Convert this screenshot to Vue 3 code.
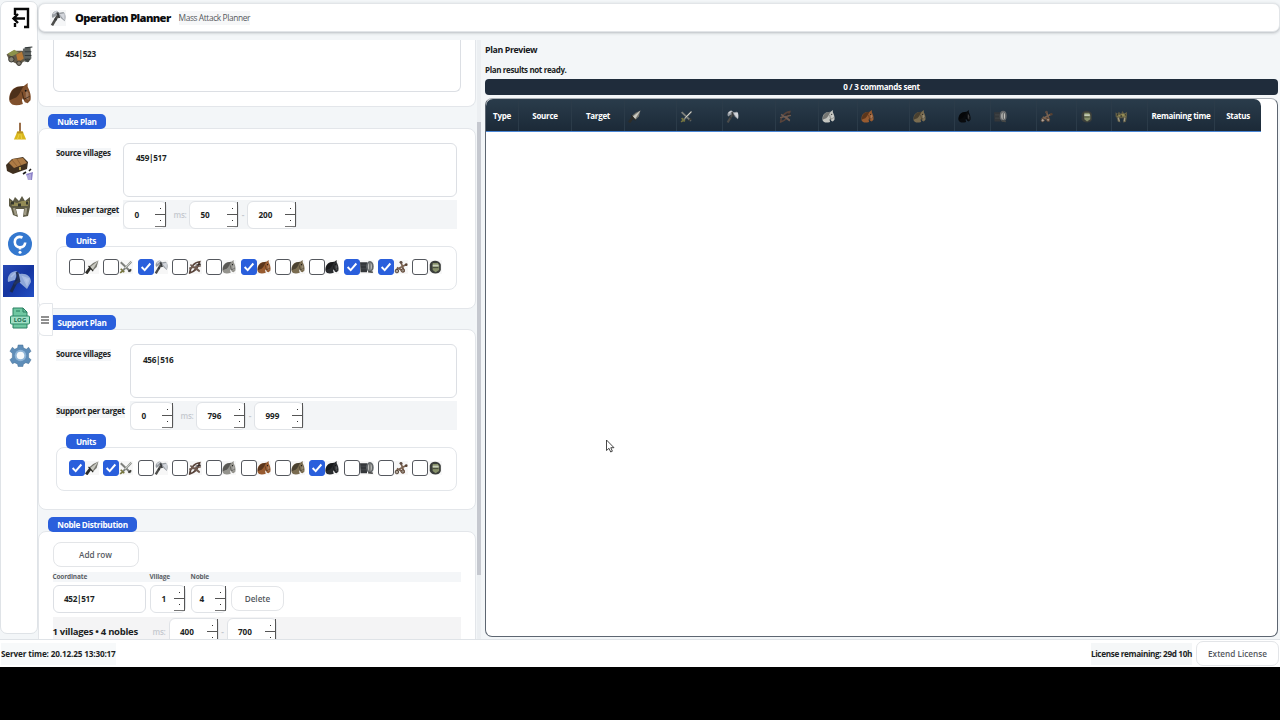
<script setup>
import { reactive } from 'vue'

const units = ['spear', 'sword', 'axe', 'archer', 'scout', 'light', 'mounted', 'heavy', 'ram', 'catapult', 'knight']
const nuke = reactive([false, false, true, false, false, true, false, false, true, true, false])
const support = reactive([true, true, false, false, false, false, false, true, false, false, false])
const plans = [
  { key: 'nuke', title: 'Nuke Plan', source: '459|517', label: 'Nukes per target', checks: nuke, nums: ['0', '50', '200'] },
  { key: 'support', title: 'Support Plan', source: '456|516', label: 'Support per target', checks: support, nums: ['0', '796', '999'] },
]
const unitCols = ['spear', 'sword', 'axe', 'archer', 'scout', 'light', 'mounted', 'heavy', 'ram', 'catapult', 'knight', 'crown']
const horses = ['scout', 'light', 'mounted', 'heavy']
const iconRef = (u) => (horses.includes(u) ? '#horse' : '#' + u)
</script>

<template>
  <div class="page">
    <svg class="defs" aria-hidden="true">
      <symbol id="horse" viewBox="0 0 24 24">
        <path d="M1 19C0 12 3 6 9 4L16 3 20 0 20 4C22 8 24 13 23 18L20 21 17 20 15 16 14 18 15 22C9 24 3 24 1 19Z" fill="currentColor" />
        <path d="M1 18C1 11 4 6 10 4L16 3C13 7 12 12 8 15 5 16 3 17 1 18Z" fill="#000" opacity=".4" />
        <path d="M18 6L21 11 21 18 18 16Z" fill="#fff" opacity=".22" />
        <path d="M14 9L16 17 22 14" fill="none" stroke="#000" stroke-width="1" opacity=".5" />
        <circle cx="18" cy="8" r="1" fill="#111" />
      </symbol>
      <symbol id="spear" viewBox="0 0 24 24">
        <path d="M2 23L10 12" stroke="#2c2c28" stroke-width="5" />
        <path d="M23 1L20 12 13 19 7 11 14 5Z" fill="#77776f" />
        <path d="M23 1L13 17 9 12Z" fill="#c9c9c1" />
        <path d="M6 10L14 19" stroke="#25251f" stroke-width="2" />
      </symbol>
      <symbol id="sword" viewBox="0 0 24 24">
        <path d="M3 4L20 20M21 3L5 20" stroke="#7d7f7b" stroke-width="3.400" />
        <path d="M21 3L10 14" stroke="#d0d3ce" stroke-width="1.800" />
        <path d="M3 15L9 21M2 22L6 19" stroke="#77763f" stroke-width="3" />
        <path d="M16 20L21 16" stroke="#3b3b35" stroke-width="3" />
      </symbol>
      <symbol id="axe" viewBox="0 0 24 24">
        <path d="M3 23L13 6" stroke="#4d4d4b" stroke-width="4" />
        <path d="M10 8L4 12C1 8 4 2 10 1L14 4 20 3C24 6 24 12 22 17L16 12 15 9Z" fill="#989da2" />
        <path d="M10 2L5 6M16 7L21 6 21 13Z" fill="#d3d6dc" stroke="#d3d6dc" stroke-width="2" />
        <path d="M11 4L14 12M7 13L10 15" stroke="#393b3d" stroke-width="3" />
      </symbol>
      <symbol id="archer" viewBox="0 0 24 24">
        <path d="M3 22C3 14 10 4 20 3 18 11 14 19 3 22Z" fill="none" stroke="#58433a" stroke-width="3" />
        <path d="M2 14L22 10M4 8L20 20M13 13L20 19" stroke="#6f5b51" stroke-width="2.600" />
        <path d="M13 9L22 7" stroke="#322a28" stroke-width="2" />
      </symbol>
      <symbol id="ram" viewBox="0 0 24 24">
        <path d="M0 4H12V21H1Z" fill="#34373a" />
        <ellipse cx="17" cy="11" rx="5" ry="8" fill="#c0c0bc" stroke="#63676a" stroke-width="3" />
        <path d="M17 5V17M2 9H10M2 15H11" stroke="#44484b" stroke-width="1.800" />
        <path d="M14 20L22 21" stroke="#474846" stroke-width="3" />
      </symbol>
      <symbol id="catapult" viewBox="0 0 24 24">
        <path d="M3 17L20 8M12 4L17 18M5 13L18 20" stroke="#7a6250" stroke-width="3" />
        <circle cx="5" cy="19" r="3" fill="#b0a59a" stroke="#4f3f34" stroke-width="1.600" />
        <circle cx="15" cy="18" r="3" fill="#968c80" stroke="#593c2c" stroke-width="1.600" />
        <circle cx="12" cy="4" r="2.500" fill="#5d4c42" />
        <circle cx="21" cy="8" r="2.300" fill="#564032" />
      </symbol>
      <symbol id="knight" viewBox="0 0 24 24">
        <path d="M3 8C4 -1 20 -1 22 8V17C20 25 6 25 3 17Z" fill="#3b3e3b" />
        <path d="M8 5H17L19 9V17L13 21 8 17Z" fill="#87916a" />
        <path d="M8 8H18V11H8Z" fill="#c8cfbd" />
        <path d="M8 13H18" stroke="#4a4f3d" stroke-width="1.800" />
      </symbol>
      <symbol id="crown" viewBox="0 0 24 24">
        <path d="M1 4L5 7 7 3 11 7 14 2 17 7 22 3 22 13 20 22 15 23 16 15 8 15 10 23 5 21 3 14 1 12Z" fill="#5d5a45" />
        <path d="M2 7L9 9 14 7 21 7 20 12H4Z" fill="#938b55" />
        <path d="M3 9H6M10 11H13M18 9H20" stroke="#35372d" stroke-width="3" />
        <path d="M6 14L8 21M18 14L17 21" stroke="#a09b85" stroke-width="2.400" />
      </symbol>
    </svg>

    <main class="main">
      <nav class="side">
        <div class="nav n-exit">
          <svg viewBox="0 0 20 22"><path d="M4 8V2H17V20H13M4 16V20M14 11.500H2M7 7L2.500 11.500 7 16" fill="none" stroke="#080808" stroke-width="2.400" /></svg>
        </div>
        <div class="nav n-cart">
          <svg viewBox="0 0 28 22">
            <path d="M1 9L8 5 20 5 21 15 14 20 4 15Z" fill="#625a49" />
            <path d="M2 8L9 4 14 7 6 11Z" fill="#8c924b" />
            <path d="M11 9L17 6 19 13 13 17Z" fill="#b77936" />
            <path d="M18 3L26 1 27 13 20 17Z" fill="#5e6360" />
            <path d="M20 2L28 1M20 6H27M20 10H27M20 14H26" stroke="#33393a" stroke-width="1.200" />
            <circle cx="6" cy="14" r="2.800" fill="#858175" stroke="#35352f" />
            <circle cx="14" cy="18" r="2.400" fill="#837a6b" stroke="#34332e" />
            <circle cx="23" cy="15" r="2" fill="#414540" />
          </svg>
        </div>
        <div class="nav n-horse"><svg viewBox="0 0 24 24"><use href="#horse" /></svg></div>
        <div class="nav n-broom">
          <svg viewBox="0 0 16 22"><path d="M7 1H9V12H7Z" fill="#8c5b31" /><path d="M5 11H11L15 20H1Z" fill="#d9b71d" /><path d="M5 11H11L12 13H4Z" fill="#b88f21" /><path d="M5 20L7 14M10 20L9 14" stroke="#efd34b" /></svg>
        </div>
        <div class="nav n-chest">
          <svg viewBox="0 0 28 24">
            <path d="M0 8L6 2 17 0 22 5 21 12 7 17 1 14Z" fill="#40301f" />
            <path d="M3 6L7 2 17 1 21 6 8 11Z" fill="#ad7b44" />
            <path d="M6 3L11 9M11 2L15 8" stroke="#8f6236" />
            <path d="M13 10H15V13H13Z" fill="#b79d4e" />
            <path d="M20 17L27 15 26 23 22 23Z" fill="#8d83c9" />
            <path d="M17 17L20 15M23 14L25 12" stroke="#1d1c1c" stroke-width="1.600" />
            <path d="M22 18V23M24 17V23" stroke="#e4e1f3" stroke-width=".8" />
          </svg>
        </div>
        <div class="nav n-crown"><svg viewBox="0 0 24 24"><use href="#crown" /></svg></div>
        <div class="nav n-help">
          <svg viewBox="0 0 24 24"><circle cx="12" cy="12" r="12" fill="#3478cf" /><path d="M14.500 5.500C10 3.500 6.800 6.500 6.800 10 6.800 13.500 9.500 15.300 12 15.300 14.800 15.300 17 13.500 17.200 10.500M12 15V17.500" fill="none" stroke="#fff" stroke-width="2.600" /><circle cx="12" cy="20.300" r="1.500" fill="#fff" /></svg>
        </div>
        <div class="nav n-axe">
          <svg viewBox="0 0 31 32">
            <path d="M8 27L17 9" stroke="#1b2a52" stroke-width="3" />
            <path d="M14 9L12 15 5 17C4 11 7 7 13 6L17 9C23 8 28 11 28 17L24 24 17 18 16 14Z" fill="#8ea6d8" />
            <path d="M12 8L8 12M20 12L26 14 24 20Z" fill="#b4c4e8" stroke="#a9bce4" stroke-width="1.500" />
            <path d="M14 7L16 16L11 19" fill="none" stroke="#24345d" stroke-width="2.600" />
          </svg>
        </div>
        <div class="nav n-log">
          <svg viewBox="0 0 20 22">
            <path d="M3 1H13L17 5V21H3Z" fill="#6fc7a1" stroke="#2b8163" />
            <path d="M13 1V5H17M6 4H10" fill="none" stroke="#287c5e" />
            <rect x=".5" y="9" width="19" height="8" rx="1" fill="#a0dfc5" stroke="#2b8867" />
            <text x="10" y="15.200" text-anchor="middle" class="logtext">LOG</text>
          </svg>
        </div>
        <div class="nav n-gear">
          <svg viewBox="0 0 24 24">
            <path d="M9.500 1H14.500L15 4 18 5.500 20.500 3.500 23 7.500 20.500 10 20.500 14 23 16.500 20.500 20.500 17.500 19.500 15 21 14.500 23.500H9.500L9 21 6 19.500 3.500 20.500 1 16.500 3.500 14V10L1 7.500 3.500 3.500 6 5.500 9 4Z" fill="#5e8db8" stroke="#416b92" stroke-width=".5" />
            <circle cx="12" cy="12" r="6" fill="#8eb4d6" /><circle cx="12" cy="12" r="4" fill="#f6fafc" />
          </svg>
        </div>
      </nav>

      <div class="work">
        <header class="head">
          <svg class="headicon" viewBox="0 0 24 24"><use href="#axe" /></svg>
          <h1 class="h1">Operation Planner</h1>
          <span class="sub">Mass Attack Planner</span>
        </header>

        <div class="cols">
          <section class="left">
            <div class="card targets"><div class="area cut">454|523</div></div>

            <template v-for="p in plans" :key="p.key">
              <div class="pill" :class="p.key">{{ p.title }}</div>
              <div class="card plan" :class="p.key">
                <div class="row top">
                  <label class="lbl"><span>Source villages</span></label>
                  <div class="area">{{ p.source }}</div>
                </div>
                <div class="row per">
                  <label class="lbl"><span>{{ p.label }}</span></label>
                  <div class="strip">
                    <div class="spin s0">{{ p.nums[0] }}<i></i></div>
                    <span class="ms">ms:</span>
                    <div class="spin">{{ p.nums[1] }}<i></i></div>
                    <span class="dash">-</span>
                    <div class="spin">{{ p.nums[2] }}<i></i></div>
                  </div>
                </div>
                <div class="pill units">Units</div>
                <div class="unitbox">
                  <div v-for="(u, i) in units" :key="u" class="unit" @click="p.checks[i] = !p.checks[i]">
                    <span class="check" :class="{ on: p.checks[i] }">
                      <svg v-if="p.checks[i]" viewBox="0 0 16 16"><path d="M3 8L6.500 11.500 13 4" fill="none" stroke="#fff" stroke-width="2.200" /></svg>
                    </span>
                    <svg class="uicon" :class="u" viewBox="0 0 24 24"><use :href="iconRef(u)" /></svg>
                  </div>
                </div>
              </div>
            </template>

            <div class="pill noble">Noble Distribution</div>
            <div class="card last">
              <button class="btn add">Add row</button>
              <div class="thead"><span class="c1">Coordinate</span><span class="c2">Village</span><span>Noble</span></div>
              <div class="nrow">
                <div class="coord">452|517</div>
                <div class="spin small">1<i></i></div>
                <div class="spin small four">4<i></i></div>
                <button class="btn del">Delete</button>
              </div>
              <div class="sum">
                <b>1 villages • 4 nobles</b>
                <span class="ms">ms:</span>
                <div class="spin">400<i></i></div>
                <span class="dash">-</span>
                <div class="spin">700<i></i></div>
              </div>
            </div>
            <div class="handle"><svg viewBox="0 0 8 8"><path d="M0 1H8M0 4H8M0 7H8" stroke="#222" stroke-width="1.100" /></svg></div>
          </section>

          <div class="scroll"><div class="thumb"></div></div>

          <section class="right">
            <h2 class="h2">Plan Preview</h2>
            <p class="msg">Plan results not ready.</p>
            <div class="progress"><span>0 / 3 commands sent</span></div>
            <div class="frame">
              <div class="cells">
                <div class="th">Type</div>
                <div class="th">Source</div>
                <div class="th">Target</div>
                <div v-for="u in unitCols" :key="u" class="th ico">
                  <svg class="hicon" :class="u" viewBox="0 0 24 24"><use :href="iconRef(u)" /></svg>
                </div>
                <div class="th"><span class="remain">Remaining time</span></div>
                <div class="th">Status</div>
              </div>
            </div>
          </section>
        </div>
      </div>
    </main>

    <footer class="foot">
      <span class="server">Server time: 20.12.25 13:30:17</span>
      <span class="license">License remaining: 29d 10h</span>
      <button class="btn extend">Extend License</button>
    </footer>
    <svg class="cursor" viewBox="0 0 10 14"><path d="M1.500 1V11.500L4 9.300 5.700 13 7.400 12.200 5.800 8.700H9Z" fill="#fff" stroke="#333" stroke-width=".9" /></svg>
  </div>
</template>

<style>
html, body { margin: 0; background: #000; overflow: hidden; }
</style>

<style scoped>
* { box-sizing: border-box; }
.page { position: relative; width: 1280px; height: 667px; background: #f3f6f8; font-family: "Open Sans", "Noto Sans", sans-serif; font-size: 8px; font-weight: 700; color: #1c1f24; line-height: 1; letter-spacing: -.3px; display: flex; flex-direction: column; }
.defs { position: absolute; width: 0; height: 0; }
.main { height: 639px; display: flex; }
.side { width: 38px; height: 633px; margin-top: 1px; background: #fff; border: 1px solid #dfe3e7; border-radius: 7px; display: flex; flex-direction: column; align-items: flex-start; padding-top: 5px; flex: none; }
.nav { height: 37.400px; width: 35px; display: flex; align-items: center; justify-content: center; flex: none; color: #80502c; }
.nav svg { display: block; }
.n-exit svg { width: 20px; height: 22px; margin: -20px 0 0 4px; }
.n-exit { height: 31px; padding-top: 10px; }
.n-cart svg { width: 28px; height: 21px; margin-left: 1px; }
.n-horse svg { width: 24px; height: 23px; margin-left: 3px; }
.n-broom svg { width: 14px; height: 21px; margin-left: 3px; }
.n-chest svg { width: 28px; height: 24px; margin-left: 3px; }
.n-crown svg { width: 24px; height: 24px; margin-left: 3px; }
.n-help svg { width: 24px; height: 24px; margin-left: 3px; }
.n-axe svg { width: 31px; height: 32px; background: linear-gradient(135deg, #2749b4, #1535a0 50%, #234fc4); }
.n-log svg { width: 20px; height: 22px; margin-left: 3px; }
.n-gear svg { width: 23px; height: 23px; margin-left: 3px; }
.logtext { font: 700 6px "Open Sans", sans-serif; fill: #17684b; letter-spacing: 0; }

.work { flex: 1; display: flex; flex-direction: column; min-width: 0; }
.head { height: 29px; margin-top: 3px; background: #fff; border-radius: 7px; border: 1px solid #e2e5e8; box-shadow: 0 1px 3px rgba(40, 50, 60, .3); display: flex; align-items: center; padding-left: 11px; flex: none; }
.headicon { width: 16px; height: 16px; background: #f5f6f7; }
.h1 { margin: 1px 0 0 9px; width: 96px; flex: none; font-size: 11.200px; font-weight: 800; letter-spacing: -.64px; color: #0c0d0f; white-space: nowrap; }
.sub { margin-left: 7.500px; margin-top: 1px; font-weight: 400; font-size: 8.400px; color: #565a60; letter-spacing: -.4px; background: #f6f7f8; padding: 3px 0; }
.cols { flex: 1; display: flex; padding-top: 8px; min-height: 0; }
.left { position: relative; width: 438px; overflow: hidden; display: flex; flex-direction: column; flex: none; }
.card { background: #fff; border: 1px solid #e3e6ea; border-radius: 8px; flex: none; }
.targets { height: 67px; border-top: 0; border-top-left-radius: 0; border-top-right-radius: 0; padding: 0 14px 0 13.500px; }
.area { border: 1px solid #dcdfe4; border-radius: 6px; background: #fff; height: 54px; flex: 1; padding: 10px 12px; font-size: 8.200px; letter-spacing: -.33px; }
.support .area { padding-top: 11px; }
.area.cut { height: 52px; border-top: 0; border-radius: 0 0 6px 6px; }
.pill { align-self: flex-start; height: 15px; margin: 7px 0 -1px 10px; background: #2a5fdc; color: #fff; border-radius: 5px; font-size: 8.200px; line-height: 15px; text-align: center; position: relative; z-index: 1; flex: none; white-space: nowrap; }
.pill.nuke { width: 58px; }
.pill.support { width: 68px; margin-top: 6px; }
.pill.noble { width: 89px; }
.pill.units { width: 40px; margin: 4px 0 -2px 10px; }
.plan { height: 181px; padding: 14px 18px 0 17px; display: flex; flex-direction: column; }
.row { display: flex; flex: none; }
.lbl { width: 67px; flex: none; padding-top: 5px; white-space: nowrap; }
.support .lbl { width: 74px; }
.lbl span { display: inline-block; background: #f4f6f8; padding: 1px 0 3px; }
.strip { margin-top: 3px; height: 29px; background: #f3f5f7; display: flex; align-items: center; flex: 1; }
.per .lbl { padding-top: 8px; }
.spin { position: relative; width: 50px; height: 28px; border: 1px solid #e0e3e7; border-radius: 6px; background: #fff; padding-left: 10.500px; line-height: 26px; font-size: 8.200px; flex: none; letter-spacing: -.1px; }
.spin.s0 { width: 44px; }
.spin i { position: absolute; right: 0; top: 0; width: 11px; height: 25px; border-right: 1px solid #555; border-bottom: 1px solid #777; background: linear-gradient(#555, #555) 0 12px / 11px 1px no-repeat, linear-gradient(#333, #333) 5px 6px / 1px 1px no-repeat, linear-gradient(#333, #333) 5px 18px / 1px 1px no-repeat; }
.ms { width: 22px; text-align: center; color: #c5c9cf; font-weight: 600; padding-left: 4px; }
.dash { width: 8px; text-align: center; color: #c5c9cf; }
.unitbox { height: 44px; border: 1px solid #e3e6ea; border-radius: 8px; display: flex; align-items: center; padding-left: 12px; padding-bottom: 3px; }
.unit { width: 34.350px; display: flex; align-items: center; flex: none; }
.check { width: 16px; height: 16px; border: 1px solid #55585e; border-radius: 3px; background: #fff; flex: none; }
.check.on { background: #2a5fdc; border-color: #2a5fdc; }
.check svg { display: block; width: 14px; height: 14px; }
.uicon { width: 14px; height: 14px; background: #f7f7f7; }
.scout { color: #94938d; }
.light { color: #985b30; }
.mounted { color: #7a6c50; }
.heavy { color: #292b2e; }
.last { height: 130px; padding: 10px 14px 0 13.500px; }
.btn { font: 600 8.200px "Open Sans", sans-serif; letter-spacing: 0; color: #55595f; background: #fff; border: 1px solid #e3e5e8; border-radius: 8px; padding: 0; display: block; height: 25px; white-space: nowrap; }
.add { width: 86px; }
.thead { height: 10px; margin: 5px 0 2px; background: #f4f6f8; display: flex; align-items: center; font-size: 6.500px; color: #5b5f66; letter-spacing: -.15px; }
.c1 { width: 97px; }
.c2 { width: 41px; }
.nrow { display: flex; align-items: center; gap: 4.500px; height: 29px; }
.coord { width: 93px; height: 28px; border: 1px solid #dcdfe4; border-radius: 6px; padding-left: 10.500px; line-height: 26px; font-size: 8.200px; letter-spacing: -.33px; }
.spin.small { width: 36px; }
.spin.four { padding-left: 8px; }
.del { width: 53px; }
.sum { margin-top: 4px; height: 30px; background: #f4f4f5; display: flex; align-items: center; }
.sum b { width: 89px; font-size: 9.500px; letter-spacing: -.28px; white-space: nowrap; font-weight: 700; }
.sum .ms { width: 27px; padding-left: 8px; }
.handle { position: absolute; left: 0; top: 263px; width: 15px; height: 33px; background: #fff; border: 1px solid #e3e6ea; border-radius: 6px 0 0 6px; z-index: 2; display: flex; align-items: center; justify-content: flex-start; padding-left: 2px; }
.handle svg { width: 8px; height: 8px; }
.scroll { width: 4px; margin-left: 1px; padding-top: 82px; background: #eceff2; }
.thumb { height: 453px; background: #c5c8cf; }
.right { flex: 1; margin-left: 4px; margin-right: 2px; display: flex; flex-direction: column; }
.h2 { font-size: 8.800px; line-height: 12px; margin: 4px 0 0; color: #17191c; letter-spacing: -.37px; }
.msg { margin: 9px 0 0; line-height: 10px; font-size: 8px; letter-spacing: -.37px; }
.progress { height: 16px; margin-top: 4px; background: #1f2c3b; color: #fff; border-radius: 4px; line-height: 16px; text-align: center; }
.frame { margin-top: 3px; height: 539px; background: #fff; border: 1px solid #5d6671; border-top-color: #aab0b6; border-radius: 7px; }
.cells { width: 775px; height: 33px; background: linear-gradient(#4a86d6, #4a86d6) 0 100% / 100% 1px no-repeat, linear-gradient(#2a3c4b, #1b2937); border-radius: 7px 7px 0 0; display: grid; grid-template-columns: 33px 53px 53px 52px 46px 53px 43px 39px 52px 45px 36px 46px 40px 35px 36px 67px 46px; color: #fff; }
.th { display: flex; align-items: center; justify-content: center; border-right: 1px solid #2b3b49; margin-bottom: 1px; padding-top: 2px; }
.th:last-child { border-right: 0; }
.ico { justify-content: flex-start; padding-left: 3px; }
.hicon { width: 13px; height: 13px; }
.hicon.scout { color: #c3c5c0; }
.hicon.heavy { color: #090b0e; }
.remain { white-space: nowrap; }
.foot { height: 28px; background: #fff; border-top: 1px solid #dfe3e7; display: flex; align-items: center; padding: 1px 0 0 1px; font-size: 8.200px; }
.server { background: #f7f9fa; padding: 7px 0; letter-spacing: -.16px; }
.license { margin-left: auto; margin-right: 4px; background: #f5f7f8; padding: 7px 0; letter-spacing: -.36px; }
.extend { width: 83px; border-radius: 7px; margin: -2px 1px 0 0; }
.cursor { position: absolute; left: 605px; top: 439px; width: 10px; height: 14px; }
</style>
